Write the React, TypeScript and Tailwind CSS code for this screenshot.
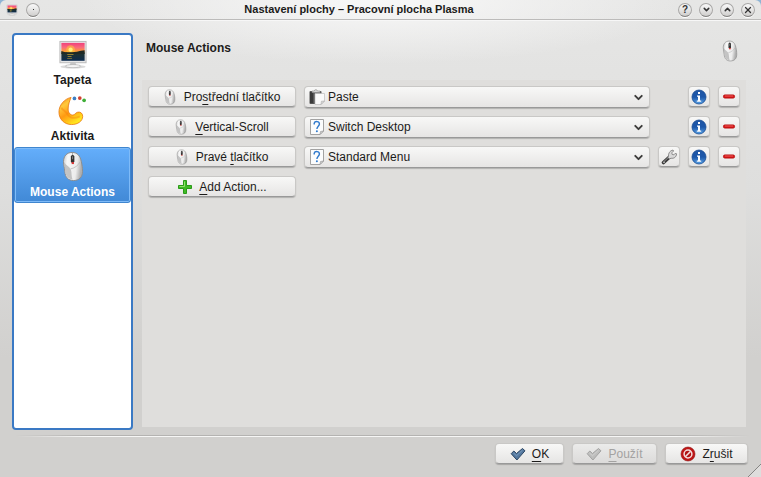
import { ReactNode } from 'react';
import { ChevronDown, ChevronUp, X } from 'lucide-react';

type IconProps = {
  className?: string;
}

const MonitorIcon = ({ className }: IconProps) => (
  <svg viewBox="0 0 32 32" className={className} aria-hidden="true">
    <defs>
      <linearGradient id="sunset" x1="0" y1="0" x2="0" y2="1">
        <stop offset="0" stopColor="#f0407c" />
        <stop offset=".25" stopColor="#f9697c" />
        <stop offset=".5" stopColor="#fda22d" />
        <stop offset=".56" stopColor="#20332c" />
        <stop offset="1" stopColor="#0d2c50" />
      </linearGradient>
    </defs>
    <ellipse cx="16" cy="28.6" rx="13" ry="1.8" fill="#ccc" opacity=".7" />
    <path d="M13.500 24h5l1 3.500h-7z" fill="#c9c9c9" />
    <ellipse cx="16" cy="28" rx="8" ry="1.600" fill="#f4f4f4" stroke="#a5a5a5" strokeWidth=".6" />
    <rect x="2.500" y="2.500" width="27" height="22" fill="#e6e6e6" stroke="#bababa" />
    <rect x="4" y="4" width="24" height="18.500" fill="url(#sunset)" />
    <circle cx="13.500" cy="11" r="4.500" fill="#ffc23c" opacity=".6" />
    <circle cx="13.500" cy="11" r="2.200" fill="#fff07a" />
    <path d="M4 12.500l4 1.300h7l5-.6 4-1.200 4-.5v4H4z" fill="#1f2a25" />
    <path d="M9.500 15.500h7v1h-6zM10.500 17.500h4v1h-4zM10 19.500h5v1h-5z" fill="#b3932f" opacity=".8" />
  </svg>
)

const PlasmaIcon = ({ className }: IconProps) => (
  <svg viewBox="0 0 32 32" className={className} aria-hidden="true">
    <defs>
      <linearGradient id="flame" x1="0" y1="0" x2=".6" y2="1">
        <stop offset="0" stopColor="#f47a0c" />
        <stop offset=".3" stopColor="#ffca3c" />
        <stop offset=".6" stopColor="#ff9a12" />
        <stop offset="1" stopColor="#ffe81f" />
      </linearGradient>
    </defs>
    <path
      d="M14 2.500C7 4 1.500 10.500 1.500 17.500 1.500 25 7 30.500 14.500 30.500c6.500 0 11.500-3.500 11.500-8.500 0-3-2.200-4.800-5-4.300-3 .6-2.800 3-5.300 3-2.700 0-4.700-2.700-4.700-6.200C11 10 12.500 6 14 2.500z"
      fill="url(#flame)"
      stroke="#e8750a"
      strokeWidth=".8"
    />
    <path d="M4 13c1 3 5 3.500 6.500 7 2 4 7 4.500 12.500 2" fill="none" stroke="#f57c0b" strokeWidth="2" opacity=".4" />
    <circle cx="17.500" cy="3.500" r="1.900" fill="#3c7fc4" />
    <circle cx="23" cy="3.200" r="1.900" fill="#d2402f" />
    <circle cx="27.500" cy="5.500" r="1.900" fill="#3fae38" />
  </svg>
)

const MouseIcon = ({ className }: IconProps) => (
  <svg viewBox="0 0 22 32" className={className} aria-hidden="true">
    <defs>
      <linearGradient id="mouse" x1="0" y1="0" x2="1" y2=".2">
        <stop offset="0" stopColor="#c4c4c4" />
        <stop offset=".25" stopColor="#f7f7f7" />
        <stop offset=".75" stopColor="#ececec" />
        <stop offset="1" stopColor="#b0b0b0" />
      </linearGradient>
    </defs>
    <path
      d="M10 1.500C4.500 1.500 1.200 5.500 1.200 11c0 4 1 6 1.300 10 .5 6 3.500 9.500 9 9.500 6 0 9.300-3.500 9.300-9.500 0-4-.3-6-1.300-10.500C18.300 5 15.500 1.500 10 1.500z"
      fill="url(#mouse)"
      stroke="#8d8d8d"
    />
    <path d="M2 11.500c1.500 3 5 4.500 6.500 7 1.500 3 .5 7 2 11-4-.5-7-3-7.500-8.500C2.800 17 1.800 15 2 11.500z" fill="#a9a9a9" opacity=".65" />
    <path d="M8.500 18.500c4-.8 8-3.500 10-7.500" fill="none" stroke="#b5b5b5" strokeWidth=".8" />
    <path d="M10.500 2v3" stroke="#aaa" />
    <rect x="8.800" y="4" width="3.600" height="8.500" rx="1.800" fill="#303030" />
    <path d="M10.600 5.500v3" stroke="#8a8a8a" />
    <rect x="9.600" y="11.500" width="2.400" height="2" fill="#d33" />
  </svg>
)

const PasteIcon = () => (
  <svg viewBox="0 0 16 16" className="size-4 shrink-0" aria-hidden="true">
    <rect x=".5" y="2" width="12" height="13" rx="1" fill="#575757" />
    <path d="M1 3h3v11H1z" fill="#3b3b3b" />
    <path d="M3 3.500V2h2.200c.3-1.800 3-1.800 3.300 0h2.500v1.500z" fill="#d5d5d5" stroke="#8c8c8c" strokeWidth=".6" />
    <path d="M6 4.500h9.500v7.500L12 15.500H6z" fill="#fafafa" stroke="#bdbdbd" strokeWidth=".7" />
    <path d="M15.500 12L12 15.500l.3-3.200z" fill="#ddd" stroke="#aaa" strokeWidth=".6" />
  </svg>
)

const UnknownIcon = () => (
  <svg viewBox="0 0 16 16" className="size-4 shrink-0" aria-hidden="true">
    <path d="M1.500.5h13V12L11 15.500H1.500z" fill="#fbfcfd" stroke="#a2a2a2" />
    <path d="M14.500 12L11 15.500l.5-3z" fill="#ddd" stroke="#999" strokeWidth=".7" />
    <path d="M5.200 5.600V4.200C5.800 2 10.600 1.800 10.400 5.100c-.2 2-2.500 2.400-2.500 4.900" fill="none" stroke="#2f79cc" strokeWidth="1.400" />
    <circle cx="7.900" cy="12.300" r="1" fill="#2f79cc" />
  </svg>
)

const PlusIcon = () => (
  <svg viewBox="0 0 16 16" className="size-4 shrink-0" aria-hidden="true">
    <path d="M6.500 1.500h3v5h5v3h-5v5h-3v-5h-5v-3h5z" fill="#3fbb24" stroke="#2a9a18" strokeLinejoin="round" />
    <path d="M7.500 2.500v5h-5" fill="none" stroke="#a4ec7e" strokeWidth=".8" />
  </svg>
)

const InfoIcon = () => (
  <svg viewBox="0 0 16 16" className="size-4" aria-hidden="true">
    <defs>
      <linearGradient id="info" x1="0" y1="0" x2="0" y2="1">
        <stop offset="0" stopColor="#1f55a5" />
        <stop offset=".5" stopColor="#1d58aa" />
        <stop offset="1" stopColor="#5aa2e6" />
      </linearGradient>
    </defs>
    <circle cx="8" cy="8" r="7" fill="url(#info)" stroke="#174a92" strokeWidth=".8" />
    <path d="M7 3h2v2H7zM6 6.500h3v5h1.200v1.200H5.800v-1.200H7V7.700H6z" fill="#fff" />
  </svg>
)

const MinusIcon = () => (
  <svg viewBox="0 0 16 16" className="size-4" aria-hidden="true">
    <rect x="2.500" y="6" width="11" height="3" rx="1.300" fill="#dc1818" stroke="#b80f0f" />
    <path d="M4 7h8" stroke="#ee6a6a" strokeWidth=".8" />
  </svg>
)

const WrenchIcon = () => (
  <svg viewBox="0 0 16 16" className="size-4" aria-hidden="true">
    <path d="M2.500 13.500L8 8.500" stroke="#3b3b3b" strokeWidth="3.600" strokeLinecap="round" />
    <path d="M3 12.500L7.500 8.300" stroke="#8f8f8f" strokeLinecap="round" />
    <path
      d="M7.500 7.200c-.3-2.800 1.200-5.500 4.500-6.200l.6 1-1.800 1.800.4 1.700 1.700.3L14.700 4l.8 1c0 3-2.700 4.800-5.500 4.200L8.500 10 6.800 8.300z"
      fill="#d9d9d9"
      stroke="#777"
      strokeWidth=".8"
    />
    <circle cx="3" cy="13.200" r=".8" fill="#ddd" />
  </svg>
)

const TickIcon = ({ disabled }: { disabled?: boolean }) => (
  <svg viewBox="0 0 16 16" className="size-4 shrink-0" aria-hidden="true">
    <path
      d="M1.200 7.700l2.600-2.700 2.700 2.500 6-5L15 4.800 6.900 14z"
      fill={disabled ? '#bdbdbc' : '#54789f'}
      stroke={disabled ? '#a3a3a2' : '#2c4663'}
      strokeLinejoin="round"
    />
    <path d="M3.500 7l3 2.700 6-5.500" fill="none" stroke={disabled ? '#d2d2d1' : '#7f9fc0'} strokeWidth=".9" />
  </svg>
)

const CancelIcon = () => (
  <svg viewBox="0 0 16 16" className="size-4 shrink-0" aria-hidden="true">
    <circle cx="8" cy="8" r="7" fill="#bf1616" stroke="#8e1010" strokeWidth=".6" />
    <circle cx="8" cy="8" r="3.900" fill="#b01212" stroke="#f3dede" strokeWidth="1.500" />
    <path d="M5.300 10.700l5.400-5.400" stroke="#f3dede" strokeWidth="1.600" />
  </svg>
)

type PushButtonProps = {
  className?: string;
  label?: string;
  disabled?: boolean;
  children: ReactNode;
}

const PushButton = ({ className, label, disabled, children }: PushButtonProps) => (
  <button
    type="button"
    aria-label={label}
    disabled={disabled}
    className={`flex h-[21px] shrink-0 items-center justify-center rounded border border-[#c9c8c6] border-b-[#999] bg-linear-to-b from-[#f8f8f7] to-[#e6e5e4] shadow-[0_1px_1px_rgba(0,0,0,0.2)] disabled:from-[#ebebea] disabled:to-[#dcdbda] disabled:text-[#a3a2a1] ${className}`}
  >
    {children}
  </button>
)

const WindowButton = ({ label, children }: { label: string; children: ReactNode }) => (
  <button
    type="button"
    aria-label={label}
    className="flex size-[14px] items-center justify-center rounded-full border border-[#a9a8a7] border-b-[#807f7e] bg-linear-to-b from-[#fafafa] to-[#cfcecd] text-[10px] leading-none font-bold text-[#333] shadow-[0_1px_0_#fff]"
  >
    {children}
  </button>
)

const categories = [
  { name: 'Tapeta', icon: <MonitorIcon className="size-8" /> },
  { name: 'Aktivita', icon: <PlasmaIcon className="size-8" /> },
  { name: 'Mouse Actions', icon: <MouseIcon className="h-8 w-[22px]" />, selected: true },
]

const actions = [
  { id: 'middle', trigger: <>Pro<u>s</u>třední tlačítko</>, plugin: 'Paste', icon: <PasteIcon /> },
  { id: 'scroll', trigger: <><u>V</u>ertical-Scroll</>, plugin: 'Switch Desktop', icon: <UnknownIcon /> },
  { id: 'right', trigger: <>Pravé <u>t</u>lačítko</>, plugin: 'Standard Menu', icon: <UnknownIcon />, configurable: true },
]

const TitleBar = () => {
  return (
    <header className="flex h-5 items-center border-b border-[#bcbbba] px-[6px] shadow-[0_1px_0_#f7f7f7]">
      <div className="flex items-center gap-2">
        <MonitorIcon className="size-3" />
        <WindowButton label="Na všech plochách">
          <span className="size-px bg-[#333]" />
        </WindowButton>
      </div>
      <h1 className="flex-1 text-center text-[11px] font-bold">Nastavení plochy – Pracovní plocha Plasma</h1>
      <div className="flex items-center gap-[7px]">
        <WindowButton label="Nápověda">?</WindowButton>
        <WindowButton label="Minimalizovat"><ChevronDown size={9} strokeWidth={4} /></WindowButton>
        <WindowButton label="Maximalizovat"><ChevronUp size={9} strokeWidth={4} /></WindowButton>
        <WindowButton label="Zavřít"><X size={10} strokeWidth={3} /></WindowButton>
      </div>
    </header>
  )
}

const App = () => {
  return (
    <div className="min-h-screen bg-[#8fb4d4] font-['Liberation_Sans',Arial,sans-serif] text-xs text-[#1c1b1a] [&_u]:underline-offset-3">
      <div className="flex min-h-screen flex-col rounded-t-md bg-[radial-gradient(ellipse_300px_64px_at_50%_0,#f8f8f8,transparent),linear-gradient(#e6e6e5,#dededd_40%,#d1d0ce_75%)]">
        <TitleBar />

        <div className="flex flex-1 gap-[9px] pt-[13px] pr-[15px] pl-3">
          <nav className="w-[121px] shrink-0 rounded border-2 border-[#3a79c4] bg-white">
            {categories.map((category) => (
              <a
                key={category.name}
                href="#"
                className={`flex h-14 flex-col items-center rounded-[3px] border pt-[3px] font-bold ${category.selected ? 'border-[#3f86cf] bg-linear-to-b from-[#64aefb] to-[#4189d6] text-white inset-shadow-[0_0_0_1px_#7fbbf8]' : 'border-transparent'}`}
              >
                {category.icon}
                <span className="leading-5">{category.name}</span>
              </a>
            ))}
          </nav>

          <main className="flex min-w-0 flex-1 flex-col pb-[3px]">
            <div className="flex h-[47px] items-start justify-between pr-2 pl-1">
              <h2 className="pt-[7px] leading-4 font-bold">Mouse Actions</h2>
              <MouseIcon className="mt-[7px] h-[22px] w-4" />
            </div>

            <div className="flex flex-1 flex-col gap-2 bg-[#dfdedc] p-[6px]">
              {actions.map((action) => (
                <div key={action.id} className="flex gap-2">
                  <PushButton className="w-[148px] gap-2">
                    <MouseIcon className="h-4 w-3" />
                    <span>{action.trigger}</span>
                  </PushButton>
                  <div className="flex h-[22px] min-w-0 flex-1 items-center gap-[3px] rounded border border-[#c9c8c6] border-b-[#999] bg-linear-to-b from-[#f8f8f7] to-[#e6e5e4] px-1 shadow-[0_1px_1px_rgba(0,0,0,0.2)]">
                    {action.icon}
                    <select aria-label={action.plugin} className="min-w-0 flex-1 appearance-none outline-none">
                      <option>{action.plugin}</option>
                    </select>
                    <ChevronDown size={13} strokeWidth={3.5} className="pointer-events-none text-[#3c3b3a]" />
                  </div>
                  {action.configurable
                    ? <PushButton className="w-[22px]" label="Nastavit"><WrenchIcon /></PushButton>
                    : <span className="w-[22px]" />}
                  <PushButton className="w-[22px]" label="Informace"><InfoIcon /></PushButton>
                  <PushButton className="w-[22px]" label="Odstranit"><MinusIcon /></PushButton>
                </div>
              ))}
              <PushButton className="w-[148px] gap-[6px]">
                <PlusIcon />
                <span><u>A</u>dd Action...</span>
              </PushButton>
            </div>
          </main>
        </div>

        <footer className="pt-[5px]">
          <div className="mr-3 ml-4 h-[2px] bg-linear-to-b from-[#b4b3b1] from-50% to-[#f6f6f5] to-50% mask-x-from-90%" />
          <div className="flex justify-end gap-2 pt-[6px] pr-[13px] pb-[13px]">
            <PushButton className="w-[69px] gap-[6px]"><TickIcon /><span><u>O</u>K</span></PushButton>
            <PushButton className="w-[85px] gap-[6px]" disabled><TickIcon disabled /><span><u>P</u>oužít</span></PushButton>
            <PushButton className="w-[83px] gap-[6px]"><CancelIcon /><span>Z<u>r</u>ušit</span></PushButton>
          </div>
        </footer>
      </div>
      <svg viewBox="0 0 13 13" className="fixed right-0 bottom-0 size-[13px]" aria-hidden="true">
        <path d="M0 13L13 0V13z" fill="#dedddc" />
        <path d="M0 13L13 0" stroke="#858483" />
      </svg>
    </div>
  )
}

export default App
